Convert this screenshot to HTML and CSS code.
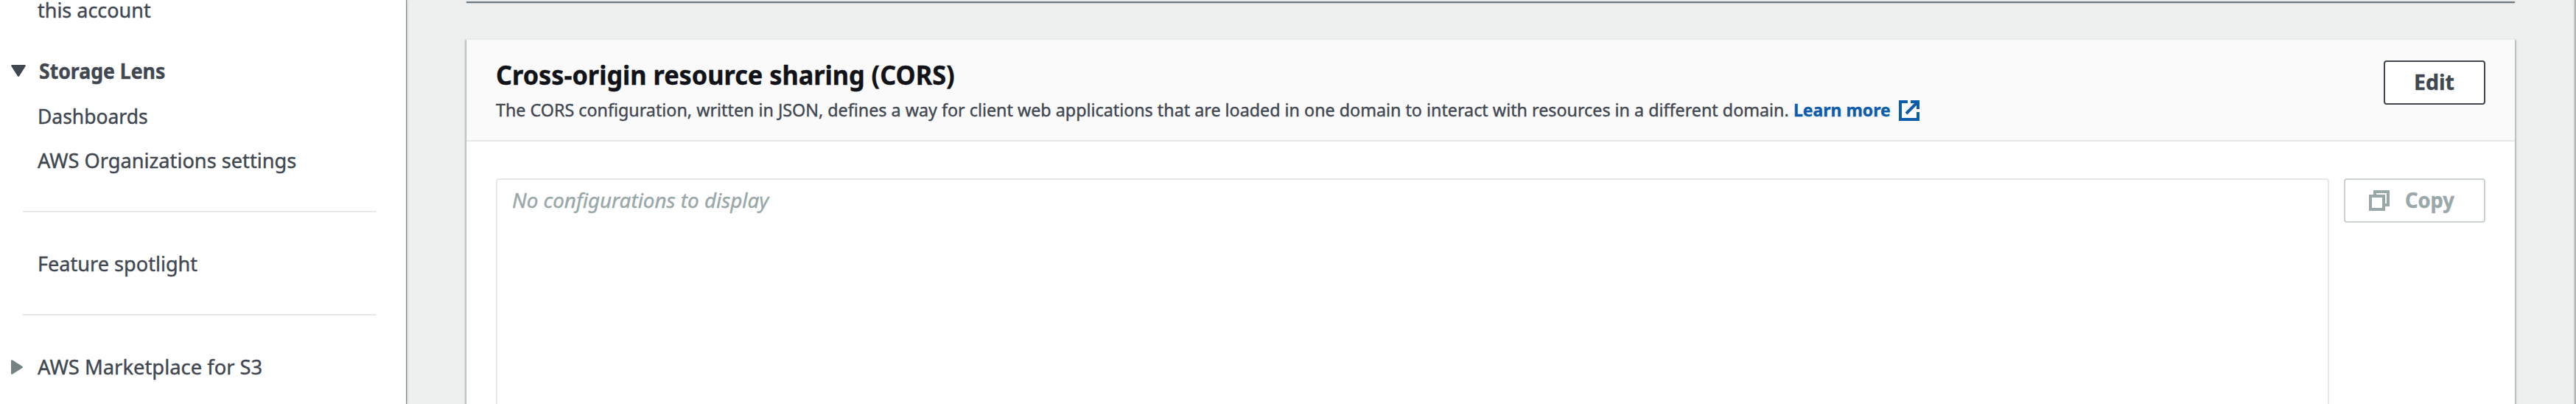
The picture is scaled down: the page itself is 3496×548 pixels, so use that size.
FILE: index.html
```html
<!DOCTYPE html>
<html lang="en">
<head>
<meta charset="utf-8">
<title>Cross-origin resource sharing (CORS)</title>
<link rel="stylesheet" href="styles.css">
</head>
<body>
<div class="app">
  <nav class="sidebar">
    <a class="nav-item nav-first"><span class="label l-account">this account</span></a>
    <a class="nav-item nav-group nav-lens">
      <svg class="caret caret-down" viewBox="0 0 20 16"><path d="M1.500 0h17q2 0 1 2L11.300 15q-1.300 2-2.600 0L.5 2q-1-2 1-2z"/></svg>
      <span class="label l-lens">Storage Lens</span>
    </a>
    <a class="nav-item nav-dash"><span class="label l-dash">Dashboards</span></a>
    <a class="nav-item nav-org"><span class="label l-org">AWS Organizations settings</span></a>
    <hr class="divider">
    <a class="nav-item nav-spaced"><span class="label l-feature">Feature spotlight</span></a>
    <hr class="divider">
    <a class="nav-item nav-spaced nav-group">
      <svg class="caret caret-right" viewBox="0 0 16 20"><path d="M0 1.500q0-2 2-1L15 8.700q2 1.300 0 2.600L2 19.500q-2 1-2-1z"/></svg>
      <span class="label l-market">AWS Marketplace for S3</span>
    </a>
  </nav>
  <main class="content">
    <section class="panel panel-previous"></section>
    <section class="panel panel-cors">
      <header class="panel-header">
        <div class="panel-heading">
          <h2 class="title"><span class="label l-title">Cross-origin resource sharing (CORS)</span></h2>
          <p class="description"><span class="label l-desc">The CORS configuration, written in JSON, defines a way for client web applications that are loaded in one domain to interact with resources in a different domain.</span><a class="learn-more"><span class="label l-learn">Learn more</span><svg class="external" viewBox="0 0 28 28"><path d="M12 2H2v24h24V16M16 2h10v10M25.500 2.500L10 18"/></svg></a></p>
        </div>
        <button class="button button-edit"><span class="label l-edit">Edit</span></button>
      </header>
      <div class="panel-body">
        <div class="editor"><span class="label l-empty">No configurations to display</span></div>
        <button class="button button-copy" disabled>
          <svg class="copy" viewBox="0 0 28 28"><path d="M2 8h18v18H2zM8 8V2h18v18h-6"/></svg>
          <span class="label l-copy">Copy</span>
        </button>
      </div>
    </section>
  </main>
  <div class="right-rail"></div>
</div>
</body>
</html>
```
FILE: styles.css
```css
* { box-sizing: border-box; }

body {
  margin: 0;
  background: #eef0f0;
  color: #414750;
  font-family: "Noto Sans", sans-serif;
  font-size: 28px;
  overflow: hidden;
}

.app { display: flex; width: 3496px; height: 548px; overflow: hidden; }

/* Labels are condensed slightly to a fixed advance width. */
.label {
  display: block;
  flex: none;
  white-space: nowrap;
  transform-origin: 0 50%;
  -webkit-text-stroke: 0.4px currentColor;
}
.l-account { width: 154px; transform: scaleX(.963); }
.l-lens { width: 171px; transform: scaleX(.951); font-weight: 700; }
.l-dash { width: 150px; transform: scaleX(.945); }
.l-org { width: 353px; transform: scaleX(.971); }
.l-feature { width: 218px; transform: scaleX(.968); }
.l-market { width: 306px; transform: scaleX(.977); }
.l-title { width: 624px; transform: scaleX(.952); }
.l-desc { width: 1758px; transform: scaleX(.9705); }
.l-learn { width: 133px; transform: scaleX(.957); }
.l-edit { width: 54px; transform: scaleX(1.02); }
.l-empty { width: 350px; transform: scaleX(.993); font-style: italic; }
.l-copy { width: 68px; transform: scaleX(.975); }

/* Side navigation */
.sidebar {
  width: 551px;
  flex: none;
  background: #fff;
  box-shadow: 1px 0 1px rgba(0, 28, 36, .4), 2px 0 3px rgba(0, 28, 36, .15);
}
.nav-item { display: flex; align-items: center; height: 44px; line-height: 44px; padding-left: 51px; }
.nav-first { height: 26px; line-height: 26px; }
.nav-group { padding-left: 15px; }
.nav-lens { margin-top: 48px; }
.nav-dash { margin-top: 17px; }
.nav-org { margin-top: 16px; }
.nav-spaced { margin-top: 47px; }
.divider { width: 480px; height: 2px; margin: 47px 0 0 31px; border: 0; background: #e5e9e9; }
.caret { flex: none; }
.caret-down { width: 20px; height: 16px; margin: 0 18px 0 0; fill: #414750; }
.caret-right { width: 16px; height: 20px; margin: 2px 20px 0 0; fill: #738282; }

/* Panels */
.content { flex: none; width: 2780px; margin-left: 82px; }
.panel {
  background: #fff;
  box-shadow: 0 2px 2px rgba(0, 28, 36, .3), 2px 2px 2px rgba(0, 28, 36, .2), -2px 2px 2px rgba(0, 28, 36, .2);
}
.panel-previous {
  height: 2px;
  background: #e8ebeb;
  box-shadow: 0 2px 1px rgba(40, 58, 70, .6), 1px 2px 2px rgba(0, 28, 36, .15), -1px 2px 2px rgba(0, 28, 36, .15);
}
.panel-cors { height: 540px; margin-top: 50px; border-top: 2px solid #e8ebeb; }
.panel-header {
  display: flex;
  justify-content: space-between;
  height: 138px;
  padding: 26px 40px 0;
  background: #fafafa;
  border-bottom: 2px solid #e5e9e9;
}
.title { margin: 0; font-size: 36px; line-height: 44px; font-weight: 700; color: #111318; }
.description { display: flex; margin: 7px 0 0; font-size: 24px; line-height: 36px; }
.learn-more { display: flex; align-items: center; gap: 10px; margin-left: 3px; font-weight: 700; color: #0b5cad; }
.external { width: 28px; height: 28px; margin-top: 2px; fill: none; stroke: #0b5cad; stroke-width: 4; }

.button {
  display: flex;
  align-items: center;
  flex: none;
  height: 60px;
  padding: 0;
  border: 2px solid #414750;
  border-radius: 4px;
  background: #fff;
  color: #414750;
  font: 700 28px "Noto Sans", sans-serif;
}
.button .label { height: 56px; line-height: 54px; text-align: left; }
.button-edit { width: 138px; margin-top: 2px; padding-left: 39px; }
.button-copy { width: 192px; padding-left: 32px; border-color: #c9d1d1; color: #99a8a8; }
.copy { flex: none; width: 28px; height: 28px; margin-right: 21px; fill: none; stroke: #99a8a8; stroke-width: 4; }

.panel-body { display: flex; gap: 20px; height: 400px; padding: 50px 40px 0; }
.editor {
  flex: 1;
  height: 340px;
  padding-left: 20px;
  border: 2px solid #e5e9e9;
  border-radius: 4px;
  color: #99a8a8;
  line-height: 54px;
}

.right-rail {
  flex: none;
  width: 2px;
  margin-left: auto;
  background: #b0b5ba;
  box-shadow: -1px 0 2px rgba(0, 28, 36, .15);
}
```
